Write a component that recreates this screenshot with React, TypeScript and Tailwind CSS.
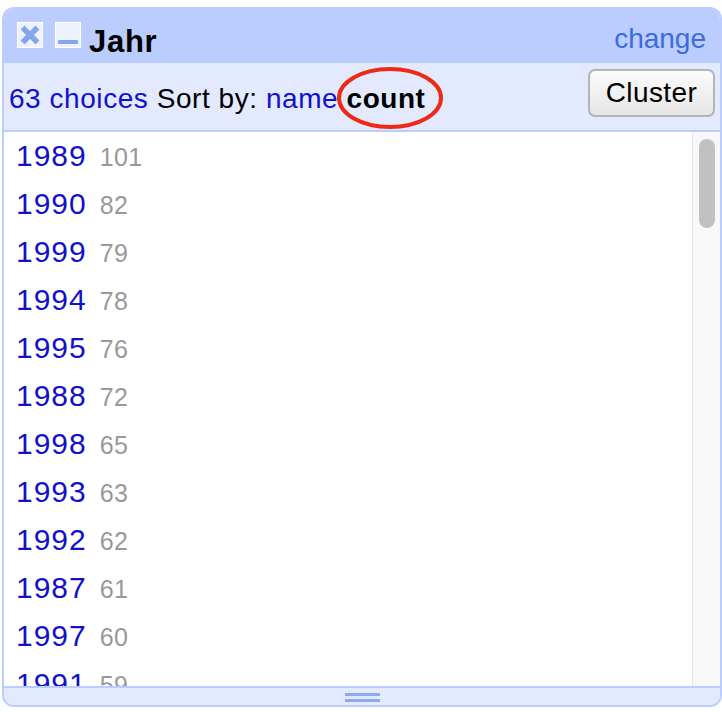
import React from "react";

const rows: [string, string][] = [
  ["1989", "101"],
  ["1990", "82"],
  ["1999", "79"],
  ["1994", "78"],
  ["1995", "76"],
  ["1988", "72"],
  ["1998", "65"],
  ["1993", "63"],
  ["1992", "62"],
  ["1987", "61"],
  ["1997", "60"],
  ["1991", "59"],
];

export default function App() {
  return (
    <div
      className="w-[722px] h-[712px] bg-white pt-[7px] pl-[2px]"
      style={{ fontFamily: '"Liberation Sans", Arial, sans-serif' }}
    >
      <div className="w-[720px] h-[700px] border-2 border-[#bbccff] rounded-[12px] overflow-hidden flex flex-col">
        {/* header */}
        <div className="h-[54px] shrink-0 bg-[#bbccff] flex items-start pl-[13px] pr-[14px]">
          <div className="mt-[13px] w-[26px] h-[26px] bg-[#eef2ff] border border-white flex items-center justify-center">
            <svg width="20" height="20" viewBox="0 0 20 20">
              <path d="M4.5 4.5 L15.5 15.5 M15.5 4.5 L4.5 15.5" stroke="#86a6ec" strokeWidth="5.5" strokeLinecap="square" />
            </svg>
          </div>
          <div className="mt-[13px] ml-[12px] w-[26px] h-[26px] bg-[#eef2ff] border border-white flex items-start justify-center">
            <div className="mt-[17px] w-[20px] h-[4px] bg-[#86a6ec] rounded-[1px]" />
          </div>
          <div className="mt-[15px] ml-[8px] text-[31px] leading-[36px] font-bold tracking-[0.7px] text-black">Jahr</div>
          <div className="flex-1" />
          <div className="mt-[14px] text-[28px] leading-[32px] text-[#3b6cd9]">change</div>
        </div>

        {/* subheader */}
        <div className="h-[69px] shrink-0 bg-[#e3e9ff] border-b-2 border-[#bbccff] flex items-start justify-between pl-[5px] pr-[5px] pt-[6px]">
          <div className="mt-[14px] text-[28px] leading-[32px] tracking-[0.55px] text-black whitespace-nowrap">
            <span className="text-[#1111cc]">63 choices</span> Sort by:{" "}
            <span className="text-[#1111cc]">name</span>{" "}
            <span className="relative font-bold">
              count
              <svg
                className="absolute left-[-10px] top-[-16px]"
                width="106"
                height="62"
                viewBox="0 0 106 62"
              >
                <ellipse cx="53" cy="31" rx="51" ry="29" fill="none" stroke="#ee2a14" strokeWidth="4" />
              </svg>
            </span>
          </div>
          <button className="w-[127px] h-[48px] rounded-[7px] border-2 border-[#b4b4b4] bg-gradient-to-b from-[#fbfbfb] to-[#e6e6e6] text-[28px] leading-[32px] tracking-[0.4px] text-black flex items-center justify-center">
            Cluster
          </button>
        </div>

        {/* list */}
        <div className="flex-1 min-h-0 flex bg-white">
          <div className="flex-1 overflow-hidden pl-[12px]">
            {rows.map(([y, c]) => (
              <div key={y} className="h-[48px] flex items-baseline">
                <span className="text-[30px] leading-[48px] tracking-[1px] text-[#1111cc]">{y}</span>
                <span className="ml-[13px] text-[25px] leading-[48px] tracking-[0.3px] text-[#999999]">{c}</span>
              </div>
            ))}
          </div>
          <div className="w-[28px] shrink-0 bg-[#f8f8f8] border-l border-[#e4e4e4] pt-[7px] pl-[6px]">
            <div className="w-[16px] h-[89px] rounded-full bg-[#c1c1c1]" />
          </div>
        </div>

        {/* footer */}
        <div className="h-[19px] shrink-0 bg-[#e3e9ff] border-t-2 border-[#bbccff] flex flex-col items-center pt-[5px] gap-[3px]">
          <div className="w-[35px] h-[3px] bg-[#8eaaee]" />
          <div className="w-[35px] h-[3px] bg-[#8eaaee]" />
        </div>
      </div>
    </div>
  );
}
